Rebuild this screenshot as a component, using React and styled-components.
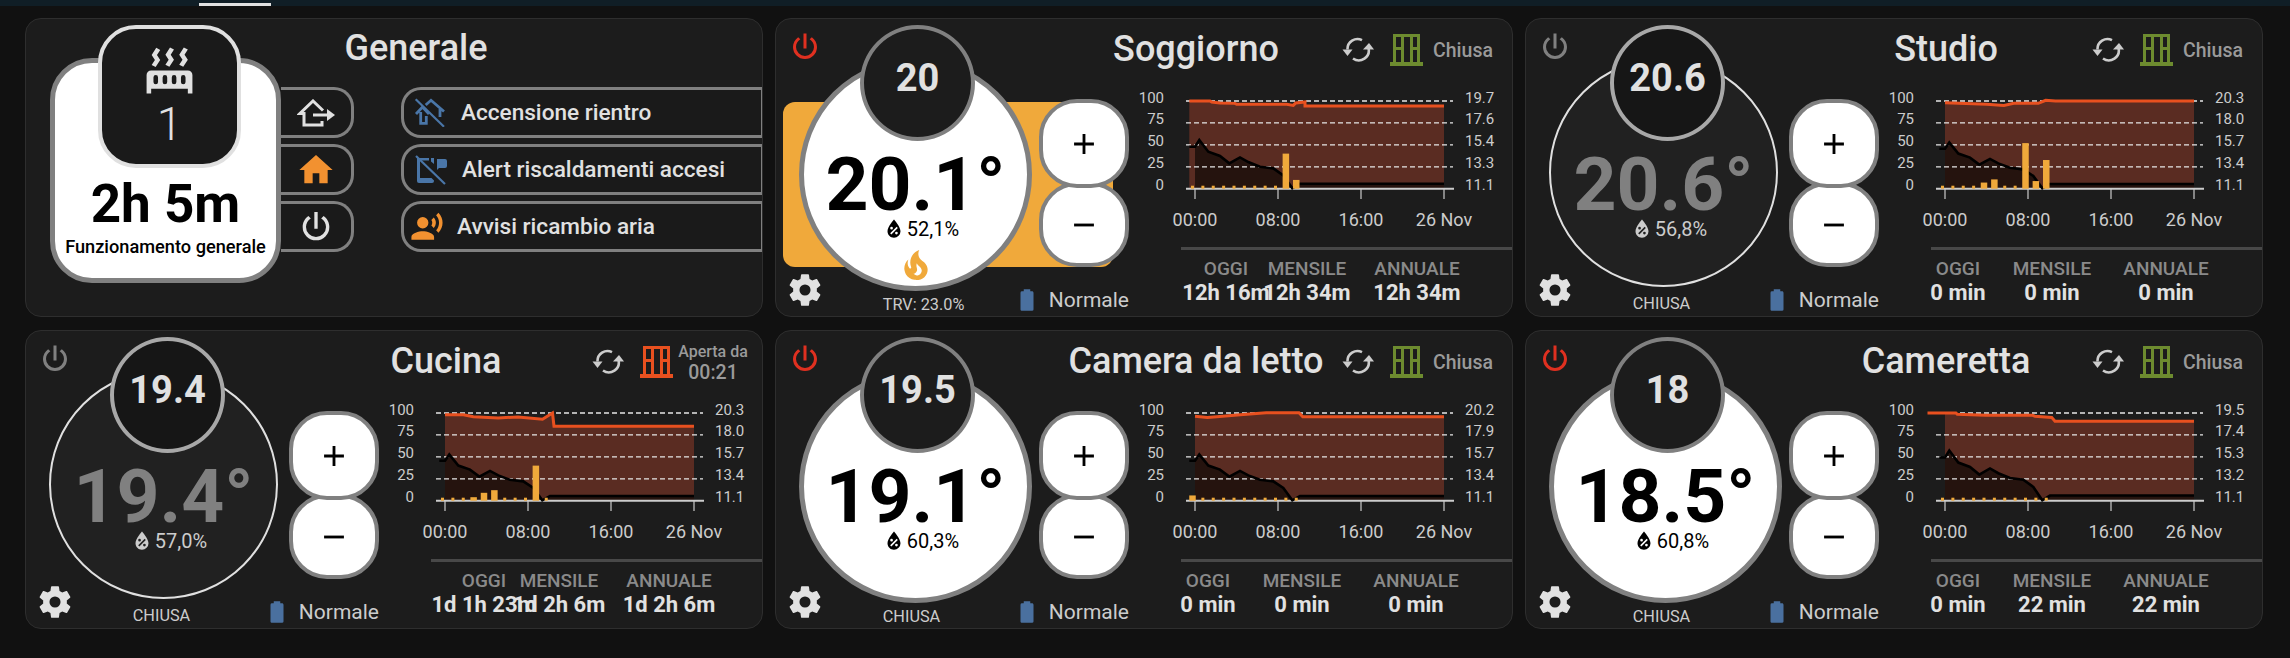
import styled, { createGlobalStyle } from 'styled-components';

const GlobalStyle = createGlobalStyle`
  html, body {
    margin: 0;
    background: #111111;
    font-family: Roboto, "Liberation Sans", sans-serif;
    color: #e1e1e1;
    overflow: hidden;
  }
`;

const TopBar = styled.div`
  height: 6px;
  background: #101e26;
  padding-top: 3px;
  box-sizing: border-box;
`;

const TabMark = styled.div`
  width: 72px;
  height: 3px;
  margin-left: 199px;
  background: #e1e1e1;
`;

const Board = styled.main`
  display: grid;
  grid-template-columns: repeat(3, 738px);
  grid-auto-rows: 299px;
  gap: 13px 12px;
  padding: 12px 27px 29px 25px;
`;

const Card = styled.section`
  box-sizing: border-box;
  background: #1c1c1c;
  border: 1px solid #2e2e2e;
  border-radius: 16px;
  display: ${(p) => (p.$hub ? 'flex' : 'grid')};
  grid-template-columns: 363px 1fr;
  min-width: 0;
`;

/* Generale card */
const Hub = styled.div`
  position: relative;
  box-sizing: border-box;
  width: 231px;
  height: 225px;
  margin: 39px 0 0 24px;
  padding-bottom: 21px;
  background: #fff;
  border: 5px solid #808080;
  border-radius: 42px;
  color: #000;
  display: flex;
  flex-direction: column;
  justify-content: flex-end;
  align-items: center;
  flex: none;
`;

const HubBadge = styled.div`
  position: absolute;
  top: -38px;
  left: 43px;
  box-sizing: border-box;
  width: 143px;
  height: 143px;
  padding-top: 14px;
  background: #1a1a1a;
  border: 4px solid #e0e0e0;
  border-radius: 38px;
  color: #e1e1e1;
  display: flex;
  flex-direction: column;
  align-items: center;
`;

const BadgeCount = styled.div`
  margin-top: 3px;
  font-size: 46px;
  line-height: 46px;
  font-weight: 300;
`;

const HubTime = styled.div`
  font-size: 53px;
  line-height: 52px;
  font-weight: 700;
  white-space: nowrap;
`;

const HubLabel = styled.div`
  margin-top: 7px;
  font-size: 18.2px;
  line-height: 20px;
  font-weight: 500;
  white-space: nowrap;
`;

const HubSide = styled.div`
  flex: 1;
  min-width: 0;
`;

const HubTitle = styled.h2`
  width: 270px;
  height: 58px;
  margin: 0 0 10px;
  font-size: 36px;
  font-weight: 500;
  display: flex;
  align-items: center;
  justify-content: center;
`;

const HubControls = styled.div`
  display: flex;
`;

const ModeColumn = styled.div`
  display: flex;
  flex-direction: column;
  gap: 6px;
  width: 73px;
  flex: none;
`;

const ModeButton = styled.div`
  box-sizing: border-box;
  height: 51px;
  background: #1a1a1a;
  border: 3.5px solid #808080;
  border-left: none;
  border-radius: 0 20px 20px 0;
  color: ${(p) => p.$color || '#e1e1e1'};
  display: flex;
  align-items: center;
  justify-content: center;
`;

const ToggleColumn = styled.div`
  display: flex;
  flex-direction: column;
  gap: 6px;
  flex: 1;
  margin-left: 47px;
`;

const ToggleRow = styled.div`
  box-sizing: border-box;
  height: 51px;
  padding-left: ${(p) => p.$pad}px;
  gap: ${(p) => p.$gap}px;
  background: #1a1a1a;
  border: 3.5px solid #808080;
  border-right-width: 1.5px;
  border-radius: 20px 0 0 20px;
  color: #e1e1e1;
  font-size: 22.6px;
  font-weight: 500;
  display: flex;
  align-items: center;
  white-space: nowrap;
`;

/* Room cards */
const LeftPane = styled.div`
  position: relative;
  display: flex;
  align-items: flex-start;
  padding: 6px 0 0 23px;
`;

const HeatBackdrop = styled.div`
  position: absolute;
  left: 7px;
  top: 83px;
  width: 330px;
  height: 165px;
  border-radius: 12px;
  background: #f0a93b;
`;

const CornerIcon = styled.div`
  position: absolute;
  left: ${(p) => p.$left}px;
  top: ${(p) => p.$top}px;
  color: ${(p) => p.$color};
  line-height: 0;
`;

const Dial = styled.div`
  position: relative;
  width: 240px;
  padding-top: 33px;
  flex: none;
  display: flex;
  flex-direction: column;
`;

const Setpoint = styled.div`
  position: absolute;
  z-index: 2;
  top: 0;
  left: 61px;
  box-sizing: border-box;
  width: 115px;
  height: 116px;
  border-radius: 50%;
  background: ${(p) => (p.$on ? '#1c1c1c' : '#161616')};
  border: 4px solid ${(p) => (p.$on ? '#808080' : '#a8a8a8')};
  color: #e1e1e1;
  font-size: 38px;
  font-weight: 700;
  display: flex;
  align-items: center;
  justify-content: center;
  padding-bottom: 10px;
`;

const Face = styled.div`
  position: relative;
  box-sizing: border-box;
  width: ${(p) => (p.$on ? 233 : 229)}px;
  height: ${(p) => (p.$on ? 233 : 229)}px;
  padding-top: ${(p) => (p.$on ? 84 : 87)}px;
  border-radius: 50%;
  background: ${(p) => (p.$on ? '#fff' : '#212121')};
  border: ${(p) => (p.$on ? '5px solid #808080' : '2.5px solid #e0e0e0')};
  color: ${(p) => (p.$on ? '#000' : '#cccccc')};
  display: flex;
  flex-direction: column;
  align-items: center;
`;

const Temperature = styled.div`
  font-size: 75px;
  line-height: 74px;
  font-weight: 700;
  white-space: nowrap;
  color: ${(p) => (p.$on ? '#000' : '#808080')};
`;

const Humidity = styled.div`
  margin: -5px 0 0 9px;
  font-size: 20px;
  line-height: 20px;
  display: flex;
  align-items: center;
`;

const Flame = styled.div`
  margin-top: 3px;
  line-height: 0;
  color: #f0a93b;
`;

const Caption = styled.div`
  width: 229px;
  margin: ${(p) => (p.$on ? 6 : 9)}px 0 0 ${(p) => p.$shift}px;
  text-align: center;
  font-size: 16.3px;
  line-height: 16px;
  color: #cccccc;
`;

const Adjust = styled.div`
  width: 90px;
  padding-top: 74px;
  flex: none;
  display: flex;
  flex-direction: column;
`;

const StepButton = styled.div`
  position: relative;
  z-index: ${(p) => (p.$front ? 3 : 1)};
  box-sizing: border-box;
  width: 90px;
  height: ${(p) => (p.$front ? 89 : 85)}px;
  margin-top: ${(p) => (p.$front ? 0 : -6)}px;
  background: #fff;
  border: 4.5px solid #808080;
  border-radius: 38px;
  color: #000;
  display: flex;
  align-items: center;
  justify-content: center;
`;

const Mode = styled.div`
  height: 26px;
  margin-top: 20px;
  display: flex;
  align-items: center;
  justify-content: flex-end;
  gap: 9px;
  font-size: 21px;
  color: #cccccc;
  white-space: nowrap;
`;

const BatteryMark = styled.span`
  color: #4a709f;
  line-height: 0;
`;

const RightPane = styled.div`
  display: flex;
  flex-direction: column;
  min-width: 0;
`;

const Header = styled.header`
  height: 62px;
  display: flex;
  align-items: center;
  flex: none;
`;

const TitleSlot = styled.div`
  width: 114px;
  padding-bottom: 3px;
  display: flex;
  justify-content: center;
  flex: none;
`;

const Title = styled.h2`
  margin: 0;
  font-size: 36px;
  font-weight: 500;
  white-space: nowrap;
  flex: none;
`;

const SyncSlot = styled.div`
  margin-left: 89px;
  line-height: 0;
  flex: none;
`;

const WindowSlot = styled.div`
  margin-left: 16px;
  line-height: 0;
  flex: none;
  color: ${(p) => (p.$open ? '#e8501f' : '#6d8b2f')};
`;

const WindowState = styled.div`
  width: 80px;
  text-align: center;
  flex: none;
  color: #9a9a9a;
  font-weight: 500;
  font-size: 19.5px;
  line-height: 21px;
`;

const OpenLabel = styled.div`
  font-size: 16px;
  white-space: nowrap;
`;

const ChartBox = styled.svg`
  display: block;
  width: 374px;
  height: 154px;
  overflow: visible;
  flex: none;
`;

const AxisLabel = styled.text`
  font-size: ${(p) => p.$size || 15}px;
  fill: #cccccc;
`;

const Divider = styled.div`
  height: 3px;
  margin: 12px 0 0 42px;
  background: #484848;
`;

const Stats = styled.div`
  display: grid;
  grid-template-columns: ${(p) => p.$cols};
  margin-left: 42px;
  padding-top: 8px;
`;

const Stat = styled.div`
  display: flex;
  flex-direction: column;
  align-items: center;
  white-space: nowrap;
  min-width: 0;
`;

const StatLabel = styled.div`
  font-size: 19px;
  line-height: 22px;
  font-weight: 500;
  color: #8a8a8a;
`;

const StatValue = styled.div`
  font-size: 22px;
  line-height: 26px;
  font-weight: 700;
  color: #e1e1e1;
`;

const Svg = styled.svg`
  display: block;
  fill: currentColor;
  flex: none;
  color: ${(p) => p.$color || 'inherit'};
`;

const paths = {
  power:
    'M16.56,5.44L15.11,6.89C16.84,7.94 18,9.83 18,12A6,6 0 0,1 12,18A6,6 0 0,1 6,12C6,9.83 7.16,7.94 8.88,6.88L7.44,5.44C5.36,6.88 4,9.28 4,12A8,8 0 0,0 12,20A8,8 0 0,0 20,12C20,9.28 18.64,6.88 16.56,5.44M13,3H11V13H13',
  cog: 'M12,15.5A3.5,3.5 0 0,1 8.5,12A3.5,3.5 0 0,1 12,8.5A3.5,3.5 0 0,1 15.5,12A3.5,3.5 0 0,1 12,15.5M19.43,12.97C19.47,12.65 19.5,12.33 19.5,12C19.5,11.67 19.47,11.34 19.43,11L21.54,9.37C21.73,9.22 21.78,8.95 21.66,8.73L19.66,5.27C19.54,5.05 19.27,4.96 19.05,5.05L16.56,6.05C16.04,5.66 15.5,5.32 14.87,5.07L14.5,2.42C14.46,2.18 14.25,2 14,2H10C9.75,2 9.54,2.18 9.5,2.42L9.13,5.07C8.5,5.32 7.96,5.66 7.44,6.05L4.95,5.05C4.73,4.96 4.46,5.05 4.34,5.27L2.34,8.73C2.21,8.95 2.27,9.22 2.46,9.37L4.57,11C4.53,11.34 4.5,11.67 4.5,12C4.5,12.33 4.53,12.65 4.57,12.97L2.46,14.63C2.27,14.78 2.21,15.05 2.34,15.27L4.34,18.73C4.46,18.95 4.73,19.03 4.95,18.95L7.44,17.94C7.96,18.34 8.5,18.68 9.13,18.93L9.5,21.58C9.54,21.82 9.75,22 10,22H14C14.25,22 14.46,21.82 14.5,21.58L14.87,18.93C15.5,18.67 16.04,18.34 16.56,17.94L19.05,18.95C19.27,19.03 19.54,18.95 19.66,18.73L21.66,15.27C21.78,15.05 21.73,14.78 21.54,14.63L19.43,12.97Z',
  home: 'M10,20V14H14V20H19V12H22L12,3L2,12H5V20H10Z',
  plus: 'M19,13H13V19H11V13H5V11H11V5H13V11H19V13Z',
  minus: 'M19,13H5V11H19V13Z',
  battery:
    'M16.67,4H15V2H9V4H7.33A1.33,1.33 0 0,0 6,5.33V20.67C6,21.4 6.6,22 7.33,22H16.67A1.33,1.33 0 0,0 18,20.67V5.33C18,4.6 17.4,4 16.67,4Z',
  water:
    'M12,3.25C12,3.25 6,10 6,14C6,17.32 8.69,20 12,20A6,6 0 0,0 18,14C18,10 12,3.25 12,3.25M14.47,9.97L15.53,11.03L9.53,17.03L8.47,15.97M9.75,10A1.25,1.25 0 0,1 11,11.25A1.25,1.25 0 0,1 9.75,12.5A1.25,1.25 0 0,1 8.5,11.25A1.25,1.25 0 0,1 9.75,10M14.25,14.5A1.25,1.25 0 0,1 15.5,15.75A1.25,1.25 0 0,1 14.25,17A1.25,1.25 0 0,1 13,15.75A1.25,1.25 0 0,1 14.25,14.5Z',
  fire: 'M17.66 11.2C17.43 10.9 17.15 10.64 16.89 10.38C16.22 9.78 15.46 9.35 14.82 8.72C13.33 7.26 13 4.85 13.95 3C13 3.23 12.17 3.75 11.46 4.32C8.87 6.4 7.85 10.07 9.07 13.22C9.11 13.32 9.15 13.42 9.15 13.55C9.15 13.77 9 13.97 8.8 14.05C8.57 14.15 8.33 14.09 8.14 13.93C8.08 13.88 8.04 13.83 8 13.76C6.87 12.33 6.69 10.28 7.45 8.64C5.78 10 4.87 12.3 5 14.47C5.06 14.97 5.12 15.47 5.29 15.97C5.43 16.57 5.7 17.17 6 17.7C7.08 19.43 8.95 20.67 10.96 20.92C13.1 21.19 15.39 20.8 17.03 19.32C18.86 17.66 19.5 15 18.56 12.72L18.43 12.46C18.28 12.13 17.66 11.2 17.66 11.2M14.5 17.5C14.22 17.74 13.76 18 13.4 18.1C12.28 18.5 11.16 17.94 10.5 17.28C11.69 17 12.4 16.12 12.61 15.23C12.78 14.43 12.46 13.77 12.33 13C12.21 12.26 12.23 11.63 12.5 10.94C12.69 11.32 12.89 11.7 13.13 12C13.9 13 15.11 13.44 15.37 14.8C15.41 14.94 15.43 15.08 15.43 15.23C15.46 16.05 15.1 16.95 14.5 17.5H14.5Z',
  radiator:
    'M7.95,3L6.53,5.19L7.95,7.4H7.94L5.95,10.5L4.22,9.6L5.64,7.39L4.22,5.19L6.22,2.09L7.95,3M13.95,2.89L12.53,5.1L13.95,7.3L13.94,7.31L11.95,10.4L10.22,9.5L11.64,7.3L10.22,5.1L12.22,2L13.95,2.89M20,2.89L18.56,5.1L20,7.3V7.31L18,10.4L16.25,9.5L17.67,7.3L16.25,5.1L18.25,2L20,2.89M2,22V14A2,2 0 0,1 4,12H20A2,2 0 0,1 22,14V22H20V20H4V22H2M6,14A1,1 0 0,0 5,15V17A1,1 0 0,0 6,18A1,1 0 0,0 7,17V15A1,1 0 0,0 6,14M10,14A1,1 0 0,0 9,15V17A1,1 0 0,0 10,18A1,1 0 0,0 11,17V15A1,1 0 0,0 10,14M14,14A1,1 0 0,0 13,15V17A1,1 0 0,0 14,18A1,1 0 0,0 15,17V15A1,1 0 0,0 14,14M18,14A1,1 0 0,0 17,15V17A1,1 0 0,0 18,18A1,1 0 0,0 19,17V15A1,1 0 0,0 18,14Z',
  voice:
    'M9,5A4,4 0 0,1 13,9A4,4 0 0,1 9,13A4,4 0 0,1 5,9A4,4 0 0,1 9,5M9,15C11.67,15 17,16.34 17,19V21H1V19C1,16.34 6.33,15 9,15M16.76,5.36C18.78,7.56 18.78,10.61 16.76,12.63L15.08,10.94C15.92,9.76 15.92,8.23 15.08,7.05L16.76,5.36M20.07,2C24,6.05 23.97,12.11 20.07,16L18.44,14.37C21.21,11.19 21.21,6.65 18.44,3.63L20.07,2Z',
};

function Icon({ name, size, color }) {
  return (
    <Svg $color={color} width={size} height={size} viewBox="0 0 24 24">
      <path d={paths[name]} fillRule="evenodd" />
    </Svg>
  );
}

function HomeExport() {
  return (
    <svg width="38" height="28" viewBox="0 0 38 28" fill="none">
      <path d="M26 11.5L16 2L3 14.5H7V26H25V22" stroke="#e1e1e1" strokeWidth="3" />
      <path d="M16 16H31" stroke="#e1e1e1" strokeWidth="3" />
      <path d="M30 10L38 16L30 22Z" fill="#e1e1e1" />
    </svg>
  );
}

function HomeOff() {
  return (
    <svg width="31" height="29" viewBox="0 0 31 29" fill="none" stroke="#4a76a8" strokeWidth="2.8">
      <path d="M1.7 1.3L30 28.7" strokeWidth="2.2" />
      <path d="M2 16L8.5 9L15 16M6.7 14V25.3H12.3V18" />
      <path d="M11.7 7L17 2.3L30 13.5M26 11V19" />
    </svg>
  );
}

function PhoneOff() {
  return (
    <svg width="32" height="30" viewBox="0 0 32 30" fill="none">
      <path d="M1 1L30 29" stroke="#4a76a8" strokeWidth="2.2" />
      <path d="M2 3H14V5.5H5V23H2Z" fill="#4a76a8" />
      <path d="M2 23H16.5L19 25.5V26Q19 28 17 28H4Q2 28 2 26Z" fill="#4a76a8" />
      <path d="M16 3H19V9L16 6.5Z" fill="#4a76a8" />
      <path d="M22 4H30Q32 4 32 6V11Q32 13 30 13H24L22 15Z" fill="#4a76a8" />
    </svg>
  );
}

function SyncIcon() {
  return (
    <svg width="32" height="26" viewBox="0 0 32 26" fill="none">
      <path d="M20 3.2A10 10 0 0 0 5.5 12.5" stroke="#cccccc" strokeWidth="2.6" />
      <path d="M11 21.5A10 10 0 0 0 26.5 11" stroke="#cccccc" strokeWidth="2.6" />
      <path d="M0.5 12.5H10.5L5.5 19Z" fill="#cccccc" />
      <path d="M21 12.5H32L27 6Z" fill="#cccccc" />
    </svg>
  );
}

function WindowIcon() {
  return (
    <Svg width="33" height="32" viewBox="0 0 33 32">
      <path
        fillRule="evenodd"
        d="M3 0H30V28H33V32H0V28H3ZM6 3V13H11V3ZM14 3V28H20V3ZM23 3V13H27V3ZM6 16V28H11V16ZM23 16V28H27V16Z"
      />
    </Svg>
  );
}

const CHART_X = 56;
const CHART_TOP = 20;
const CHART_H = 87.7;
const yOf = (v) => CHART_TOP + ((100 - v) * CHART_H) / 100;
const linePath = (pts) =>
  pts.map(([x, v], i) => `${i ? 'L' : 'M'}${CHART_X + x} ${yOf(v)}`).join(' ');

const outside = [
  [-5.7, 47.9], [0, 47.9], [4.3, 55.5], [13.3, 42.2], [25, 37.3], [34.3, 28.9], [45, 35.7],
  [53.3, 30.4], [65, 25.1], [78.3, 23.2], [88.3, 15.2], [97.3, 0.4], [105, 5.7], [249, 5.7],
];

function HistoryChart({ room }) {
  const { target, bars, brownFrom = 0, lift = 1, scale } = room;
  const dark = outside.map(([x, v]) => [x, v * lift]);
  const brown = [[brownFrom, target[0][1]], ...target.filter(([x]) => x > brownFrom)];
  const brownPath = `${linePath(brown)} L${CHART_X + 249} ${yOf(0)} L${CHART_X + brownFrom} ${yOf(0)} Z`;
  const darkFill = dark.filter(([x]) => x >= 0);
  const darkPath = `${linePath(darkFill)} L${CHART_X + 249} ${yOf(0)} L${CHART_X} ${yOf(0)} Z`;
  return (
    <ChartBox viewBox="0 0 374 154">
      <path d={brownPath} fill="#5a2c22" />
      <path d={darkPath} fill="#25130e" />
      {[100, 75, 50, 25].map((v) => (
        <line key={v} x1="47" x2="314" y1={yOf(v)} y2={yOf(v)} stroke="#e6e6e6" strokeWidth="1.3" strokeDasharray="5 3" />
      ))}
      <line x1="47" x2="315" y1={yOf(0)} y2={yOf(0)} stroke="#cccccc" strokeWidth="2" />
      {[0, 83, 166, 249].map((x) => (
        <line key={x} x1={CHART_X + x} x2={CHART_X + x} y1={yOf(0)} y2="118" stroke="#cccccc" strokeWidth="1.2" />
      ))}
      <path d={linePath(dark)} fill="none" stroke="#000" strokeWidth="2.6" />
      <path d={linePath(target)} fill="none" stroke="#e8501f" strokeWidth="3" />
      {bars.map((v, i) => {
        const w = v ? 6.5 : 3;
        const h = v ? (v * CHART_H) / 100 : 3;
        return (
          <rect key={i} x={CHART_X - 2.5 + 10.375 * i - w / 2} y={yOf(0) - h} width={w} height={h} fill="#f0a93b" />
        );
      })}
      {[100, 75, 50, 25, 0].map((v) => (
        <AxisLabel key={v} x="25" y={yOf(v) + 1.5} textAnchor="end">{v}</AxisLabel>
      ))}
      {scale.map((v, i) => (
        <AxisLabel key={v} x="326" y={yOf(100 - i * 25) + 1.5}>{v}</AxisLabel>
      ))}
      {['00:00', '08:00', '16:00', '26 Nov'].map((t, i) => (
        <AxisLabel key={t} $size={18} x={CHART_X + 83 * i} y="144.5" textAnchor="middle">{t}</AxisLabel>
      ))}
    </ChartBox>
  );
}

function RoomCard({ room }) {
  const { on, heating, trv } = room;
  return (
    <Card>
      <LeftPane>
        {heating && <HeatBackdrop />}
        <CornerIcon $left={10.5} $top={9.5} $color={on ? '#e03020' : '#808080'}>
          <Icon name="power" size={36} />
        </CornerIcon>
        <CornerIcon $left={9.5} $top={252} $color="#e1e1e1">
          <Icon name="cog" size={38} />
        </CornerIcon>
        <Dial>
          <Setpoint $on={on}>{room.setpoint}</Setpoint>
          <Face $on={on}>
            <Temperature $on={on}>{room.temp}°</Temperature>
            <Humidity>
              <Icon name="water" size={26} />
              {room.humidity}%
            </Humidity>
            {heating && (
              <Flame>
                <Icon name="fire" size={40} />
              </Flame>
            )}
          </Face>
          <Caption $on={on} $shift={trv ? 10 : -2}>{trv || 'CHIUSA'}</Caption>
        </Dial>
        <Adjust>
          <StepButton $front>
            <Icon name="plus" size={34} />
          </StepButton>
          <StepButton>
            <Icon name="minus" size={34} />
          </StepButton>
          <Mode>
            <BatteryMark>
              <Icon name="battery" size={26} />
            </BatteryMark>
            Normale
          </Mode>
        </Adjust>
      </LeftPane>
      <RightPane>
        <Header>
          <TitleSlot>
            <Title>{room.name}</Title>
          </TitleSlot>
          <SyncSlot>
            <SyncIcon />
          </SyncSlot>
          <WindowSlot $open={room.openFor}>
            <WindowIcon />
          </WindowSlot>
          {room.openFor ? (
            <WindowState>
              <OpenLabel>Aperta da</OpenLabel>
              {room.openFor}
            </WindowState>
          ) : (
            <WindowState>Chiusa</WindowState>
          )}
        </Header>
        <HistoryChart room={room} />
        <Divider />
        <Stats $cols={room.cols}>
          {['OGGI', 'MENSILE', 'ANNUALE'].map((label, i) => (
            <Stat key={label}>
              <StatLabel>{label}</StatLabel>
              <StatValue>{room.stats[i]}</StatValue>
            </Stat>
          ))}
        </Stats>
      </RightPane>
    </Card>
  );
}

const NARROW = '54px 134px 94px';

const rooms = [
  {
    name: 'Soggiorno', on: true, heating: true, trv: 'TRV: 23.0%', setpoint: '20', temp: '20.1', humidity: '52,1',
    scale: ['19.7', '17.6', '15.4', '13.3', '11.1'], cols: '90px 72px 148px', brownFrom: -5.7,
    stats: ['12h 16m', '12h 34m', '12h 34m'],
    target: [[-5.7, 100], [15, 100], [16.7, 98.9], [25, 97.7], [40, 97.3], [41.7, 96.2], [91.7, 96.2], [98.3, 95], [100.7, 97.7], [110, 98.9], [110, 94.3], [249, 94.3]],
    bars: [0, 0, 0, 0, 0, 0, 0, 0, 0, 40, 10],
  },
  {
    name: 'Studio', on: false, setpoint: '20.6', temp: '20.6', humidity: '56,8',
    scale: ['20.3', '18.0', '15.7', '13.4', '11.1'], cols: NARROW, lift: 0.95,
    stats: ['0 min', '0 min', '0 min'],
    target: [[0, 98.1], [41.7, 96.2], [58.9, 95], [68.8, 97.3], [93.3, 97.3], [100.7, 100.8], [110.5, 100], [249, 100]],
    bars: [0, 0, 0, 0, 7, 10.6, 0, 0, 52, 8.7, 32.7],
  },
  {
    name: 'Cucina', on: false, setpoint: '19.4', temp: '19.4', humidity: '57,0', openFor: '00:21',
    scale: ['20.3', '18.0', '15.7', '13.4', '11.1'], cols: '106px 44px 176px', lift: 0.95,
    stats: ['1d 1h 23m', '1d 2h 6m', '1d 2h 6m'],
    target: [[0, 98], [18.4, 98], [28.4, 95.8], [53.2, 94.3], [73, 95.5], [97.5, 92.8], [107.5, 100], [109, 84.9], [249, 84.9]],
    bars: [0, 0, 0, 4, 9, 12, 0, 0, 0, 40, 0],
  },
  {
    name: 'Camera da letto', on: true, setpoint: '19.5', temp: '19.1', humidity: '60,3',
    scale: ['20.2', '17.9', '15.7', '13.4', '11.1'], cols: NARROW, lift: 0.95,
    stats: ['0 min', '0 min', '0 min'],
    target: [[0, 96.2], [12.3, 95], [21.7, 95.8], [45.3, 98.1], [71.2, 100.4], [104, 100.4], [107.8, 95.8], [249, 95.8]],
    bars: [6, 0, 0, 0, 0, 0, 0, 0, 0, 0, 0],
  },
  {
    name: 'Cameretta', on: true, setpoint: '18', temp: '18.5', humidity: '60,8',
    scale: ['19.5', '17.4', '15.3', '13.2', '11.1'], cols: NARROW, lift: 1.03,
    stats: ['0 min', '22 min', '22 min'],
    target: [[-17.5, 100], [10.9, 100], [12.3, 98.5], [40.6, 97.3], [87.8, 97.3], [90, 96.2], [106.7, 95], [110, 90.5], [249, 90.5]],
    bars: [0, 0, 0, 0, 0, 0, 0, 0, 0, 0, 0],
  },
];

const toggles = [
  { label: 'Accensione rientro', pad: 10, gap: 16, icon: <HomeOff /> },
  { label: 'Alert riscaldamenti accesi', pad: 11, gap: 15, icon: <PhoneOff /> },
  { label: 'Avvisi ricambio aria', pad: 6, gap: 13, icon: <Icon name="voice" size={34} color="#f29130" /> },
];

function GeneralCard() {
  return (
    <Card $hub>
      <Hub>
        <HubBadge>
          <Icon name="radiator" size={55} />
          <BadgeCount>1</BadgeCount>
        </HubBadge>
        <HubTime>2h 5m</HubTime>
        <HubLabel>Funzionamento generale</HubLabel>
      </Hub>
      <HubSide>
        <HubTitle>Generale</HubTitle>
        <HubControls>
          <ModeColumn>
            <ModeButton><HomeExport /></ModeButton>
            <ModeButton $color="#f29130"><Icon name="home" size={40} /></ModeButton>
            <ModeButton><Icon name="power" size={40} /></ModeButton>
          </ModeColumn>
          <ToggleColumn>
            {toggles.map((t) => (
              <ToggleRow key={t.label} $pad={t.pad} $gap={t.gap}>
                {t.icon}
                {t.label}
              </ToggleRow>
            ))}
          </ToggleColumn>
        </HubControls>
      </HubSide>
    </Card>
  );
}

function App() {
  return (
    <>
      <GlobalStyle />
      <TopBar>
        <TabMark />
      </TopBar>
      <Board>
        <GeneralCard />
        {rooms.map((room) => (
          <RoomCard key={room.name} room={room} />
        ))}
      </Board>
    </>
  );
}

export default App;
